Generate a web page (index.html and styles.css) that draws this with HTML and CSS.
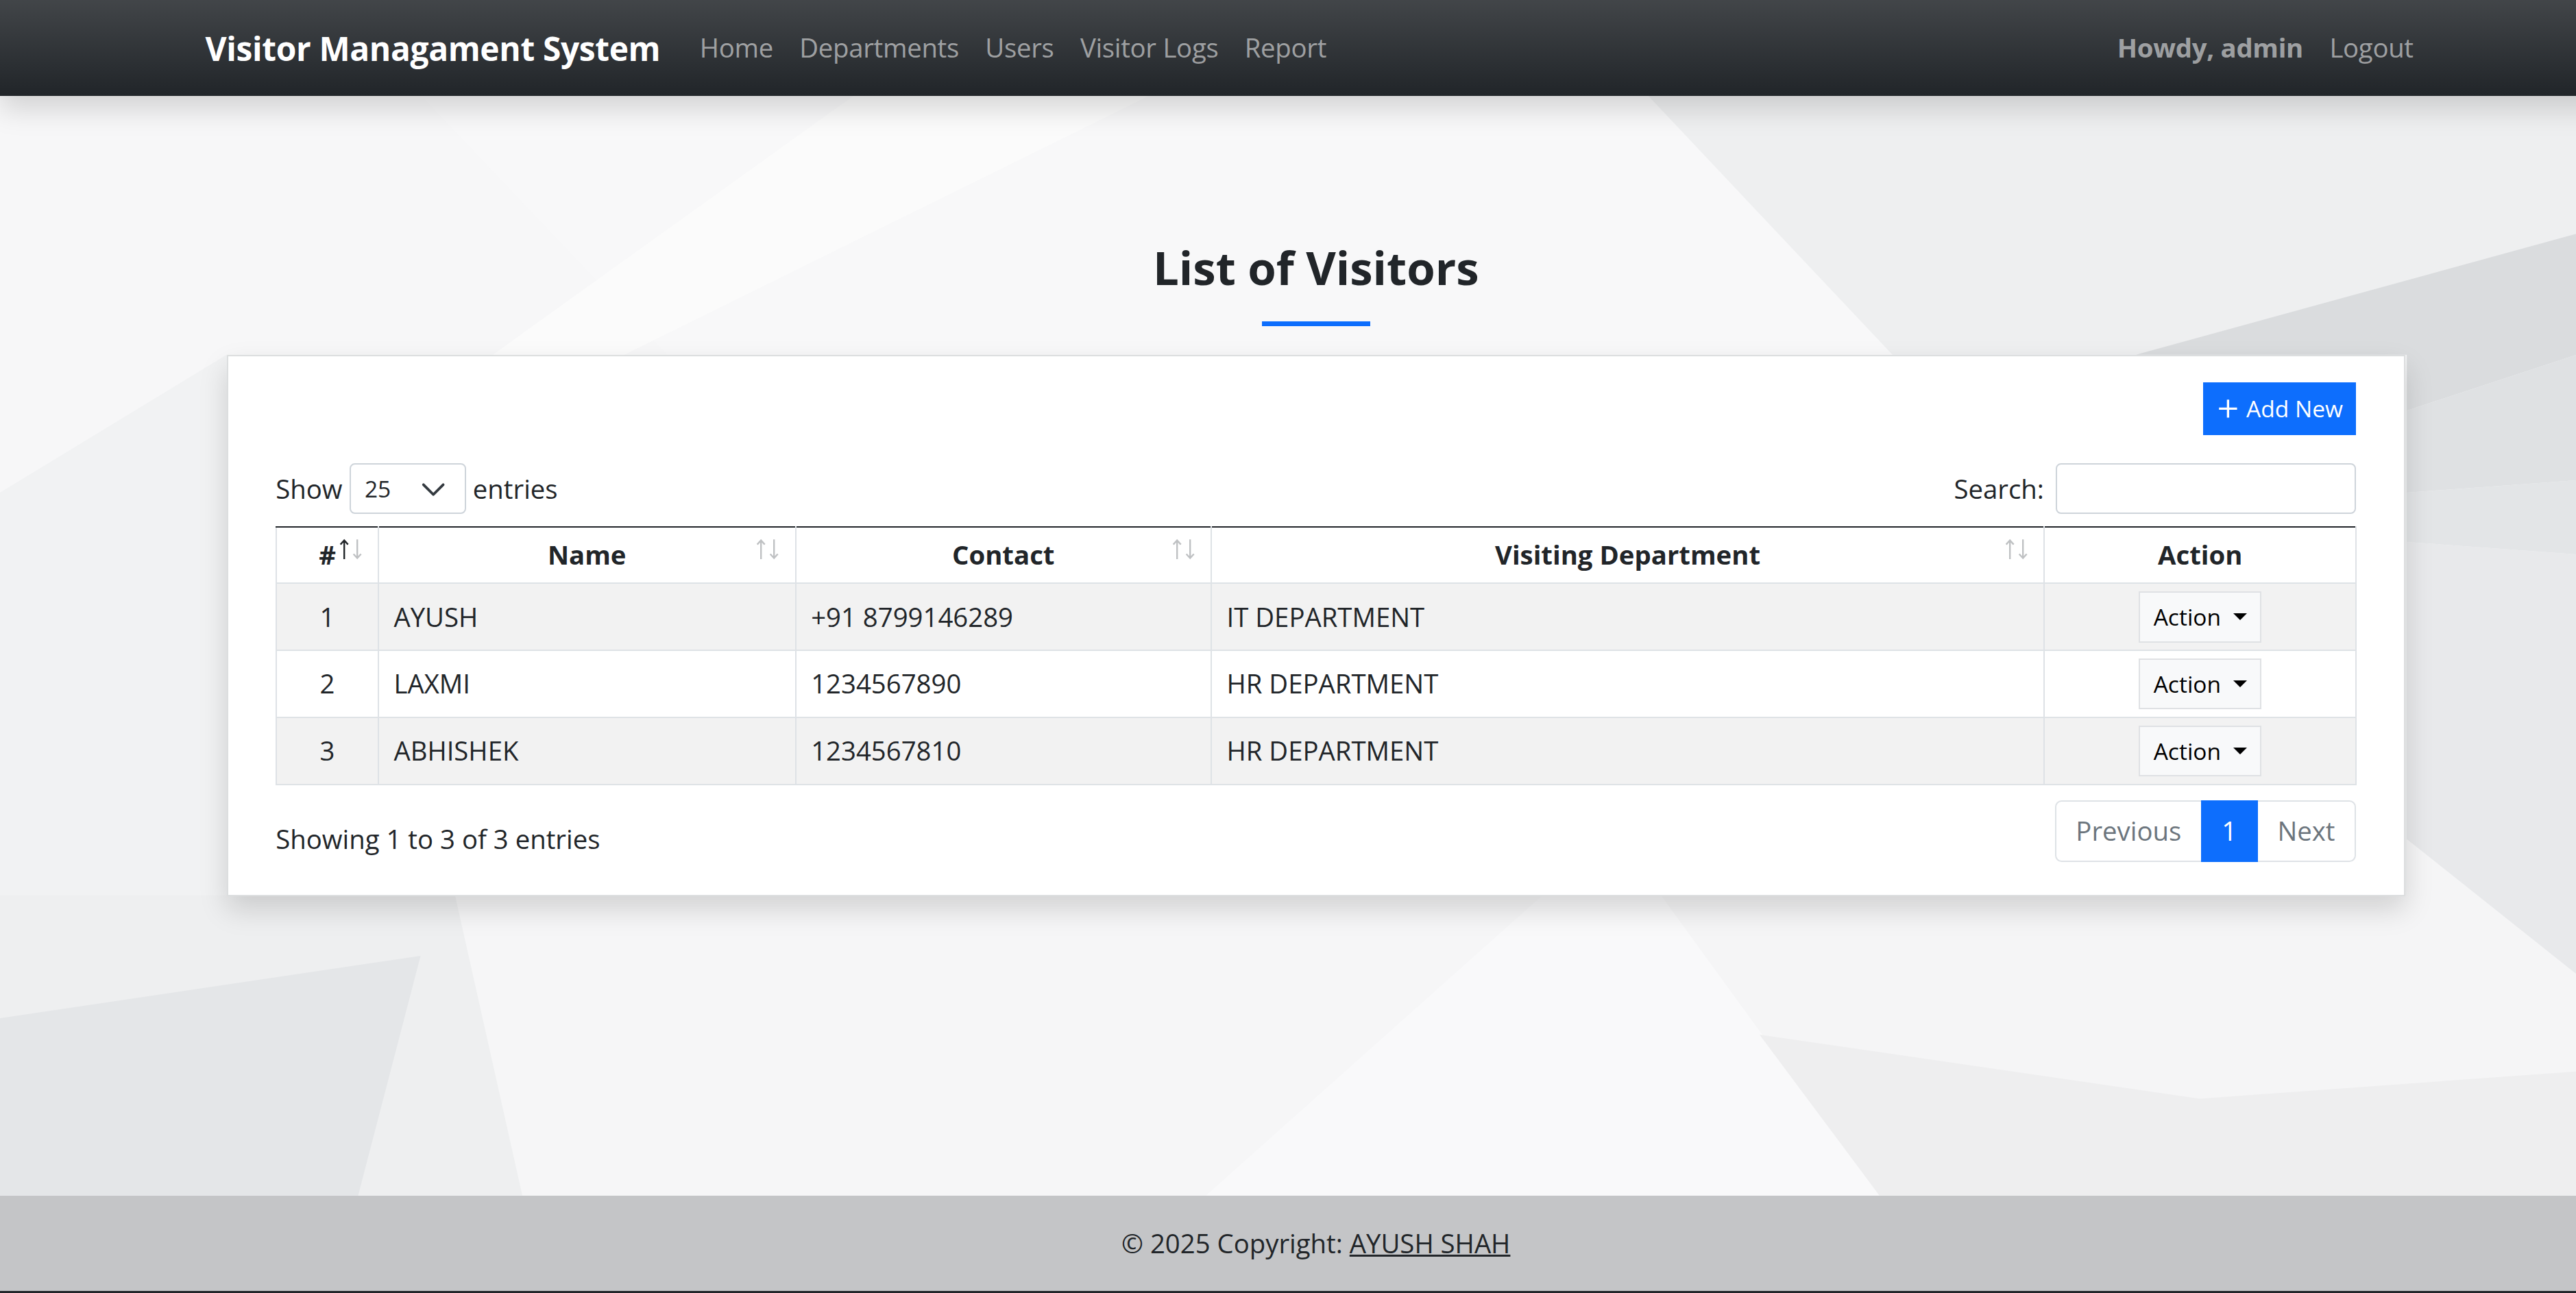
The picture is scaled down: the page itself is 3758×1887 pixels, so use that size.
FILE: index.html
```html
<!DOCTYPE html>
<html lang="en">
<head>
<meta charset="utf-8">
<title>Visitor Managament System</title>
<link rel="stylesheet" href="styles.css">
</head>
<body>
<div class="page">
  <nav class="navbar">
    <div class="nav-left">
      <a class="brand" href="#">Visitor Managament System</a>
      <ul class="nav-links">
        <li><a class="nav-link" href="#">Home</a></li>
        <li><a class="nav-link" href="#">Departments</a></li>
        <li><a class="nav-link" href="#">Users</a></li>
        <li><a class="nav-link" href="#">Visitor Logs</a></li>
        <li><a class="nav-link" href="#">Report</a></li>
      </ul>
    </div>
    <div class="nav-right">
      <span class="howdy">Howdy, admin</span>
      <a class="nav-link" href="#">Logout</a>
    </div>
  </nav>

  <main class="main">
    <svg class="bg" viewBox="0 58.4 1602 669.7" preserveAspectRatio="none" aria-hidden="true">
      <rect x="0" y="58" width="1602" height="672" fill="#f3f4f5"/>
      <polygon points="0,58 256,58 406,216 138,216 0,300" fill="#f7f7f8"/>
      <polygon points="256,58 1003,58 1152,216 406,216" fill="#f8f8f9"/>
      <polygon points="520,58 700,58 380,216 300,216" fill="#fbfbfb"/>
      <polygon points="1003,58 1602,58 1602,133 1300,216 1152,216" fill="#eeeff0"/>
      <polygon points="1300,216 1602,133 1602,205 1465,250 1465,216" fill="#dadcde"/>
      <polygon points="1465,250 1602,205 1602,290 1465,300" fill="#dfe1e3"/>
      <polygon points="1465,300 1602,290 1602,340 1465,330" fill="#e3e5e7"/>
      <polygon points="1465,330 1602,340 1602,620 1465,511" fill="#e8e9eb"/>
      <polygon points="0,300 138,216 138,545 0,545" fill="#f1f2f3"/>
      <polygon points="0,545 277,545 318,728 0,728" fill="#eeeff0"/>
      <polygon points="0,620 256,582 218,728 0,728" fill="#e4e6e8"/>
      <polygon points="277,545 939,545 734,728 318,728" fill="#f6f6f7"/>
      <polygon points="939,545 1011,545 1144,728 734,728" fill="#f9f9fa"/>
      <polygon points="1011,545 1465,545 1465,511 1602,620 1602,728 1144,728" fill="#f5f5f6"/>
      <polygon points="1071,630 1339,669 1602,650 1602,728 1144,728" fill="#eeeeef"/>
    </svg>

    <div class="content">
      <h3 class="title">List of Visitors</h3>
      <div class="title-bar"></div>

      <div class="card">
        <div class="toolbar">
          <button class="btn-add" type="button">
            <svg class="plus" viewBox="0 0 12 12" width="12" height="12" aria-hidden="true"><path d="M6 0.5V11.5M0.5 6H11.5" stroke="#fff" stroke-width="1.4" fill="none"/></svg>
            <span>Add New</span>
          </button>
        </div>

        <div class="dt-top">
          <label class="dt-length">Show
            <span class="select"><span>25</span><svg viewBox="0 0 16 12" width="16" height="12" aria-hidden="true"><path d="M2 3.5l6 6 6-6" stroke="#343a40" stroke-width="1.6" fill="none" stroke-linecap="round" stroke-linejoin="round"/></svg></span>
            entries</label>
          <label class="dt-filter">Search:<input class="search" type="search" aria-label="Search"></label>
        </div>

        <table class="table">
          <colgroup>
            <col class="w-num"><col class="w-name"><col class="w-contact"><col class="w-dept"><col class="w-action">
          </colgroup>
          <thead>
            <tr>
              <th class="sortable">#<span class="sort"><svg class="arrow on" viewBox="0 0 6 13" width="6" height="13"><path d="M3 12.5V1.2M0.7 3.6L3 1.1L5.3 3.6" stroke="currentColor" stroke-width="1" fill="none"/></svg><svg class="arrow" viewBox="0 0 6 13" width="6" height="13"><path d="M3 0.5V11.8M0.7 9.4L3 11.9L5.3 9.4" stroke="currentColor" stroke-width="1" fill="none"/></svg></span></th>
              <th class="sortable">Name<span class="sort"><svg class="arrow" viewBox="0 0 6 13" width="6" height="13"><path d="M3 12.5V1.2M0.7 3.6L3 1.1L5.3 3.6" stroke="currentColor" stroke-width="1" fill="none"/></svg><svg class="arrow" viewBox="0 0 6 13" width="6" height="13"><path d="M3 0.5V11.8M0.7 9.4L3 11.9L5.3 9.4" stroke="currentColor" stroke-width="1" fill="none"/></svg></span></th>
              <th class="sortable">Contact<span class="sort"><svg class="arrow" viewBox="0 0 6 13" width="6" height="13"><path d="M3 12.5V1.2M0.7 3.6L3 1.1L5.3 3.6" stroke="currentColor" stroke-width="1" fill="none"/></svg><svg class="arrow" viewBox="0 0 6 13" width="6" height="13"><path d="M3 0.5V11.8M0.7 9.4L3 11.9L5.3 9.4" stroke="currentColor" stroke-width="1" fill="none"/></svg></span></th>
              <th class="sortable">Visiting Department<span class="sort"><svg class="arrow" viewBox="0 0 6 13" width="6" height="13"><path d="M3 12.5V1.2M0.7 3.6L3 1.1L5.3 3.6" stroke="currentColor" stroke-width="1" fill="none"/></svg><svg class="arrow" viewBox="0 0 6 13" width="6" height="13"><path d="M3 0.5V11.8M0.7 9.4L3 11.9L5.3 9.4" stroke="currentColor" stroke-width="1" fill="none"/></svg></span></th>
              <th>Action</th>
            </tr>
          </thead>
          <tbody>
            <tr>
              <td class="center">1</td><td>AYUSH</td><td>+91 8799146289</td><td>IT DEPARTMENT</td>
              <td class="action-cell"><button class="btn-action" type="button">Action<span class="caret"></span></button></td>
            </tr>
            <tr>
              <td class="center">2</td><td>LAXMI</td><td>1234567890</td><td>HR DEPARTMENT</td>
              <td class="action-cell"><button class="btn-action" type="button">Action<span class="caret"></span></button></td>
            </tr>
            <tr>
              <td class="center">3</td><td>ABHISHEK</td><td>1234567810</td><td>HR DEPARTMENT</td>
              <td class="action-cell"><button class="btn-action" type="button">Action<span class="caret"></span></button></td>
            </tr>
          </tbody>
        </table>

        <div class="dt-bottom">
          <div class="dt-info">Showing 1 to 3 of 3 entries</div>
          <ul class="pagination">
            <li class="page-item disabled"><span class="page-link">Previous</span></li>
            <li class="page-item active"><span class="page-link">1</span></li>
            <li class="page-item disabled"><span class="page-link">Next</span></li>
          </ul>
        </div>
      </div>
    </div>
  </main>

  <footer class="footer">© 2025 Copyright: <a href="#">AYUSH SHAH</a></footer>
</div>
</body>
</html>
```

FILE: styles.css
```css
html {
  zoom: 2.3967;
  overflow: hidden;
}

body {
  margin: 0;
  font-family: "Open Sans", "Noto Sans", sans-serif;
  font-size: 16px;
  line-height: 1.5;
  color: #212529;
  background: #f3f4f5;
}

.page {
  width: 1602px;
}

/* ---------- Navbar ---------- */
.navbar {
  position: relative;
  z-index: 2;
  height: 58.4px;
  box-sizing: border-box;
  padding: 0 125px;
  display: flex;
  align-items: center;
  justify-content: space-between;
  background-color: #212529;
  background-image: linear-gradient(180deg, rgba(255, 255, 255, 0.15), rgba(255, 255, 255, 0));
  box-shadow: 0 0.5rem 1rem rgba(0, 0, 0, 0.15);
}

.nav-left,
.nav-right {
  display: flex;
  align-items: center;
}

.brand {
  font-size: 20px;
  line-height: 30px;
  font-weight: 700;
  letter-spacing: -0.16px;
  color: #fff;
  text-decoration: none;
  margin-right: 16px;
  padding-top: 1px;
}

.nav-links {
  display: flex;
  list-style: none;
  margin: 0;
  padding: 0;
}

.nav-link {
  display: block;
  padding: 8px;
  letter-spacing: -0.12px;
  color: rgba(255, 255, 255, 0.55);
  text-decoration: none;
}

.howdy {
  display: block;
  padding: 8px;
  font-weight: 700;
  letter-spacing: -0.12px;
  color: rgba(255, 255, 255, 0.55);
}

/* ---------- Main ---------- */
.main {
  position: relative;
  height: 669.7px;
  box-sizing: border-box;
  padding-top: 87.5px;
}

.bg {
  position: absolute;
  left: 0;
  top: 0;
  width: 100%;
  height: 100%;
  z-index: 0;
  display: block;
}

.content {
  position: relative;
  z-index: 1;
  width: 1326px;
  margin: 0 auto;
}

.title {
  margin: 0;
  text-align: center;
  font-size: 28px;
  line-height: 1.2;
  font-weight: 700;
  color: #212529;
}

.title-bar {
  width: 66px;
  height: 3px;
  background: #0d6efd;
  margin: 16.2px auto 17.3px;
}

.card {
  background: #fff;
  border: 1px solid #dcdedf;
  box-shadow: 0 0.5rem 1rem rgba(0, 0, 0, 0.15);
  padding: 16px 29px 18px;
}

.toolbar {
  display: flex;
  justify-content: flex-end;
  margin-bottom: 17px;
}

.btn-add {
  display: inline-flex;
  align-items: center;
  gap: 5px;
  height: 32px;
  padding: 0 8px 0 9.5px;
  border: 0;
  border-radius: 0;
  background: #0d6efd;
  color: #fff;
  font-family: inherit;
  font-size: 14px;
  line-height: 21px;
  cursor: pointer;
}

.plus {
  display: block;
}

/* ---------- DataTables controls ---------- */
.dt-top {
  display: flex;
  justify-content: space-between;
  align-items: center;
  height: 31.6px;
}

.dt-length,
.dt-filter {
  display: flex;
  align-items: center;
  gap: 4.2px;
  white-space: nowrap;
}

.dt-filter {
  gap: 7px;
}

.select {
  display: inline-flex;
  align-items: center;
  justify-content: space-between;
  width: 71px;
  height: 31px;
  box-sizing: border-box;
  padding: 0 11px 0 8.5px;
  border: 1px solid #ced4da;
  border-radius: 3.2px;
  background: #fff;
  font-size: 14px;
  line-height: 21px;
}

.select svg {
  display: block;
}

.search {
  width: 183px;
  height: 31px;
  box-sizing: border-box;
  margin: 0;
  padding: 4px 8px;
  border: 1px solid #ced4da;
  border-radius: 3.2px;
  background: #fff;
  font-family: inherit;
  font-size: 14px;
  outline: none;
}

/* ---------- Table ---------- */
.table {
  width: 100%;
  margin-top: 7px;
  margin-bottom: 7px;
  border-collapse: collapse;
  table-layout: fixed;
}

.w-num { width: 62px; }
.w-name { width: 254px; }
.w-contact { width: 253px; }
.w-dept { width: 507px; }
.w-action { width: 190px; }

.table th {
  position: relative;
  padding: 4.8px 8px;
  line-height: 24px;
  font-weight: 700;
  text-align: center;
  border: 1px solid #dee2e6;
  border-top: 1px solid #212529;
  background: #fff;
}

.table td {
  height: 24px;
  padding: 8px 9px;
  line-height: 24px;
  border: 1px solid #dee2e6;
  vertical-align: middle;
  background: #fff;
}

.table tbody tr:nth-child(odd) td {
  background: #f2f2f2;
}

.table td.center {
  text-align: center;
}

.table td.action-cell {
  padding: 4.5px 9px;
  height: 31px;
  line-height: 0;
  text-align: center;
}

.sort {
  position: absolute;
  right: 9.5px;
  top: 6.7px;
  display: flex;
  gap: 2px;
  height: 13px;
}

.arrow {
  display: block;
  color: #bfc1c3;
}

.arrow.on {
  color: #212529;
}

.btn-action {
  display: inline-flex;
  align-items: center;
  height: 31px;
  box-sizing: border-box;
  padding: 0 8px;
  border: 1px solid #dfe1e4;
  border-radius: 0;
  background: #f8f9fa;
  color: #000;
  font-family: inherit;
  font-size: 14px;
  line-height: 21px;
  vertical-align: top;
  cursor: pointer;
}

.caret {
  display: inline-block;
  margin-left: 7.4px;
  width: 0;
  height: 0;
  border-top: 4.2px solid #000;
  border-left: 4.2px solid transparent;
  border-right: 4.2px solid transparent;
}

/* ---------- Bottom row ---------- */
.dt-bottom {
  display: flex;
  justify-content: space-between;
  align-items: flex-start;
}

.dt-info {
  padding-top: 14px;
}

.pagination {
  display: flex;
  list-style: none;
  margin: 2px 0;
  padding: 0;
}

.page-link {
  display: block;
  padding: 6px 12px;
  line-height: 24px;
  border: 1px solid #dee2e6;
  margin-left: -1px;
  background: #fff;
  color: #6c757d;
}

.page-item:first-child .page-link {
  margin-left: 0;
  border-radius: 4px 0 0 4px;
}

.page-item:last-child .page-link {
  border-radius: 0 4px 4px 0;
}

.page-item.active .page-link {
  position: relative;
  background: #0d6efd;
  border-color: #0d6efd;
  color: #fff;
}

/* ---------- Footer ---------- */
.footer {
  height: 24px;
  box-sizing: content-box;
  padding: 17px 16px;
  text-align: center;
  background: #c4c5c7;
  color: #212529;
  border-bottom: 1.3px solid #212529;
}

.footer a {
  color: #212529;
  text-decoration: underline;
}
```
